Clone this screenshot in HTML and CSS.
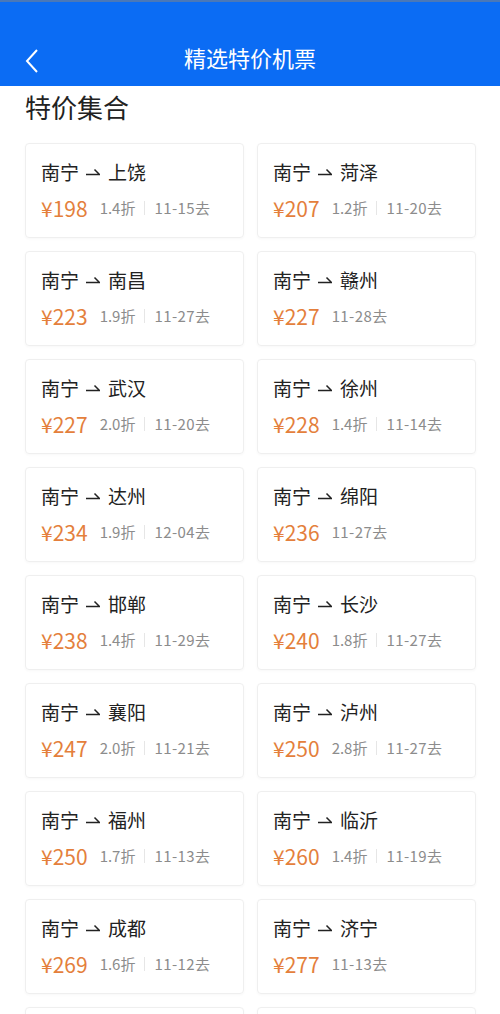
FILE: index.html
```html
<!DOCTYPE html>
<html lang="zh-CN">
<head>
    <meta charset="UTF-8">
    <meta name="viewport" content="width=device-width, initial-scale=1.0">
    <title>精选特价机票</title>
    <link rel="stylesheet" href="styles.css">
</head>
<body>

    <header class="topbar">
        <a class="back" href="#">
            <svg width="16" height="26" viewBox="0 0 16 26"><path d="M13 2 L3 13 L13 24" fill="none" stroke="#fff" stroke-width="2"/></svg>
        </a>
        <h1>精选特价机票</h1>
    </header>

    <h2 class="section-title">特价集合</h2>

    <main class="grid">
        <div class="card">
            <div class="route">南宁<svg class="arrow" viewBox="0 0 14 8"><path d="M0 6.5 H13.5 L8.5 1.5" fill="none" stroke="#222" stroke-width="1.5"/></svg>上饶</div>
            <div class="info"><span class="price">¥198</span><span class="disc">1.4折</span><span class="sep"></span><span class="date">11-15去</span></div>
        </div>
        <div class="card">
            <div class="route">南宁<svg class="arrow" viewBox="0 0 14 8"><path d="M0 6.5 H13.5 L8.5 1.5" fill="none" stroke="#222" stroke-width="1.5"/></svg>菏泽</div>
            <div class="info"><span class="price">¥207</span><span class="disc">1.2折</span><span class="sep"></span><span class="date">11-20去</span></div>
        </div>
        <div class="card">
            <div class="route">南宁<svg class="arrow" viewBox="0 0 14 8"><path d="M0 6.5 H13.5 L8.5 1.5" fill="none" stroke="#222" stroke-width="1.5"/></svg>南昌</div>
            <div class="info"><span class="price">¥223</span><span class="disc">1.9折</span><span class="sep"></span><span class="date">11-27去</span></div>
        </div>
        <div class="card">
            <div class="route">南宁<svg class="arrow" viewBox="0 0 14 8"><path d="M0 6.5 H13.5 L8.5 1.5" fill="none" stroke="#222" stroke-width="1.5"/></svg>赣州</div>
            <div class="info"><span class="price">¥227</span><span class="date">11-28去</span></div>
        </div>
        <div class="card">
            <div class="route">南宁<svg class="arrow" viewBox="0 0 14 8"><path d="M0 6.5 H13.5 L8.5 1.5" fill="none" stroke="#222" stroke-width="1.5"/></svg>武汉</div>
            <div class="info"><span class="price">¥227</span><span class="disc">2.0折</span><span class="sep"></span><span class="date">11-20去</span></div>
        </div>
        <div class="card">
            <div class="route">南宁<svg class="arrow" viewBox="0 0 14 8"><path d="M0 6.5 H13.5 L8.5 1.5" fill="none" stroke="#222" stroke-width="1.5"/></svg>徐州</div>
            <div class="info"><span class="price">¥228</span><span class="disc">1.4折</span><span class="sep"></span><span class="date">11-14去</span></div>
        </div>
        <div class="card">
            <div class="route">南宁<svg class="arrow" viewBox="0 0 14 8"><path d="M0 6.5 H13.5 L8.5 1.5" fill="none" stroke="#222" stroke-width="1.5"/></svg>达州</div>
            <div class="info"><span class="price">¥234</span><span class="disc">1.9折</span><span class="sep"></span><span class="date">12-04去</span></div>
        </div>
        <div class="card">
            <div class="route">南宁<svg class="arrow" viewBox="0 0 14 8"><path d="M0 6.5 H13.5 L8.5 1.5" fill="none" stroke="#222" stroke-width="1.5"/></svg>绵阳</div>
            <div class="info"><span class="price">¥236</span><span class="date">11-27去</span></div>
        </div>
        <div class="card">
            <div class="route">南宁<svg class="arrow" viewBox="0 0 14 8"><path d="M0 6.5 H13.5 L8.5 1.5" fill="none" stroke="#222" stroke-width="1.5"/></svg>邯郸</div>
            <div class="info"><span class="price">¥238</span><span class="disc">1.4折</span><span class="sep"></span><span class="date">11-29去</span></div>
        </div>
        <div class="card">
            <div class="route">南宁<svg class="arrow" viewBox="0 0 14 8"><path d="M0 6.5 H13.5 L8.5 1.5" fill="none" stroke="#222" stroke-width="1.5"/></svg>长沙</div>
            <div class="info"><span class="price">¥240</span><span class="disc">1.8折</span><span class="sep"></span><span class="date">11-27去</span></div>
        </div>
        <div class="card">
            <div class="route">南宁<svg class="arrow" viewBox="0 0 14 8"><path d="M0 6.5 H13.5 L8.5 1.5" fill="none" stroke="#222" stroke-width="1.5"/></svg>襄阳</div>
            <div class="info"><span class="price">¥247</span><span class="disc">2.0折</span><span class="sep"></span><span class="date">11-21去</span></div>
        </div>
        <div class="card">
            <div class="route">南宁<svg class="arrow" viewBox="0 0 14 8"><path d="M0 6.5 H13.5 L8.5 1.5" fill="none" stroke="#222" stroke-width="1.5"/></svg>泸州</div>
            <div class="info"><span class="price">¥250</span><span class="disc">2.8折</span><span class="sep"></span><span class="date">11-27去</span></div>
        </div>
        <div class="card">
            <div class="route">南宁<svg class="arrow" viewBox="0 0 14 8"><path d="M0 6.5 H13.5 L8.5 1.5" fill="none" stroke="#222" stroke-width="1.5"/></svg>福州</div>
            <div class="info"><span class="price">¥250</span><span class="disc">1.7折</span><span class="sep"></span><span class="date">11-13去</span></div>
        </div>
        <div class="card">
            <div class="route">南宁<svg class="arrow" viewBox="0 0 14 8"><path d="M0 6.5 H13.5 L8.5 1.5" fill="none" stroke="#222" stroke-width="1.5"/></svg>临沂</div>
            <div class="info"><span class="price">¥260</span><span class="disc">1.4折</span><span class="sep"></span><span class="date">11-19去</span></div>
        </div>
        <div class="card">
            <div class="route">南宁<svg class="arrow" viewBox="0 0 14 8"><path d="M0 6.5 H13.5 L8.5 1.5" fill="none" stroke="#222" stroke-width="1.5"/></svg>成都</div>
            <div class="info"><span class="price">¥269</span><span class="disc">1.6折</span><span class="sep"></span><span class="date">11-12去</span></div>
        </div>
        <div class="card">
            <div class="route">南宁<svg class="arrow" viewBox="0 0 14 8"><path d="M0 6.5 H13.5 L8.5 1.5" fill="none" stroke="#222" stroke-width="1.5"/></svg>济宁</div>
            <div class="info"><span class="price">¥277</span><span class="date">11-13去</span></div>
        </div>
        <div class="card"></div>
        <div class="card"></div>
    </main>

</body>
</html>
```

FILE: styles.css
```css
body {
    font-family: "Noto Sans CJK SC", "Noto Sans", sans-serif;
    margin: 0;
    padding: 0;
    background-color: #fff;
    color: #222;
}

.topbar {
    background-color: #0b6cf4;
    border-top: 2px solid #4a78b8;
    height: 84px;
    display: flex;
    align-items: flex-end;
    justify-content: center;
    position: relative;
}

.topbar h1 {
    color: white;
    font-size: 22px;
    font-weight: normal;
    line-height: 54px;
    margin: 0;
    padding-bottom: 2px;
}

.back {
    position: absolute;
    left: 24px;
    top: 46px;
    display: block;
}

.back svg {
    display: block;
}

.section-title {
    font-size: 26px;
    font-weight: normal;
    line-height: 42px;
    margin: 0 0 15px 25px;
    color: #222;
}

.grid {
    display: grid;
    grid-template-columns: 219px 219px;
    gap: 13px;
    padding-left: 25px;
}

.card {
    height: 95px;
    box-sizing: border-box;
    border: 1px solid #efefef;
    border-radius: 4px;
    box-shadow: 0 1px 3px rgba(0, 0, 0, 0.03);
    padding: 15px 0 0 15px;
}

.route {
    font-size: 19px;
    line-height: 26px;
    display: flex;
    align-items: center;
}

.arrow {
    width: 14px;
    height: 8px;
    margin: 0 8px 0 7px;
}

.info {
    margin-top: 10px;
    line-height: 26px;
    display: flex;
    align-items: center;
    color: #8c8c8c;
    font-size: 15px;
}

.price {
    color: #e47f3c;
    font-size: 21px;
    margin-right: 12px;
}

.date {
    letter-spacing: 0.4px;
}

.sep {
    width: 1px;
    height: 14px;
    background-color: #e6e6e6;
    margin: 0 9px;
}
```
